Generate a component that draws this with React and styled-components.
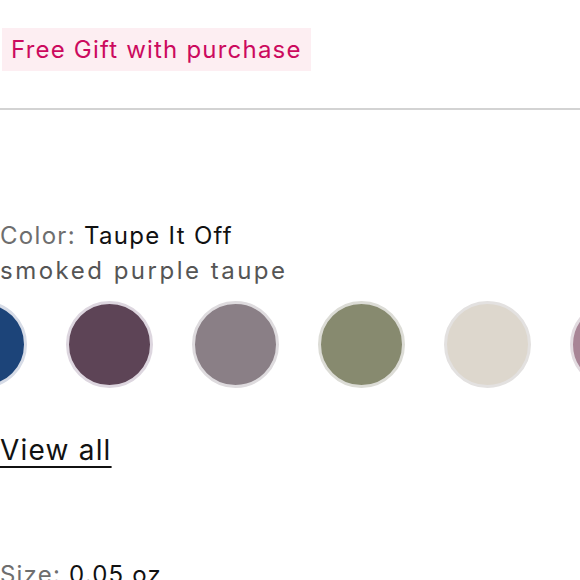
import styled, { createGlobalStyle } from "styled-components";

const GlobalStyle = createGlobalStyle`
    html, body {
        margin: 0;
        padding: 0;
        background: #fff;
        overflow: hidden;
    }
    body {
        font-family: "Inter", "Liberation Sans", sans-serif;
        color: #111;
    }
`;

const Page = styled.div`
    width: 580px;
    height: 580px;
    overflow: hidden;
    padding-top: 28px;
    box-sizing: border-box;
`;

const PromoBadge = styled.div`
    display: inline-flex;
    align-items: center;
    margin-left: 2px;
    height: 43px;
    padding: 0 9px;
    background: #fdeef2;
    color: #cc0a5e;
    font-size: 24px;
    letter-spacing: 1.2px;
`;

const Divider = styled.hr`
    margin: 37px 0 0;
    border: 0;
    height: 2px;
    background: #d3d3d3;
`;

const ColorBlock = styled.div`
    margin-top: 108px;
    font-size: 24px;
    letter-spacing: 1.3px;
    line-height: 35px;
`;

const Label = styled.span`
    color: #6e6e6e;
`;

const Value = styled.span`
    color: #111;
`;

const Description = styled.div`
    color: #555;
    letter-spacing: 2.5px;
`;

const SwatchViewport = styled.div`
    margin-top: 13px;
    overflow: hidden;
`;

const SwatchTrack = styled.div`
    display: flex;
    gap: 39px;
    margin-left: -60px;
`;

const Swatch = styled.div`
    flex: 0 0 auto;
    width: 87px;
    height: 87px;
    border-radius: 50%;
    box-sizing: border-box;
    background: ${(p) => p.color};
    border: 3px solid ${(p) => p.ring};
`;

const ViewAll = styled.a`
    display: inline-block;
    margin-top: 45px;
    font-size: 28px;
    color: #111;
    text-decoration: underline;
    text-decoration-thickness: 2px;
    text-underline-offset: 6px;
    letter-spacing: 1.2px;
`;

const SizeRow = styled.div`
    margin-top: 93px;
    font-size: 24px;
    letter-spacing: 1.2px;
`;

const swatches = [
    { color: "#1c4479", ring: "#d6dbe6" },
    { color: "#5d4456", ring: "#ddd6df" },
    { color: "#8a7f86", ring: "#dedbde" },
    { color: "#878a6f", ring: "#dcdcd6" },
    { color: "#ddd7cd", ring: "#e3e1e0" },
    { color: "#a88596", ring: "#e2dbe0" },
];

export default function App() {
    return (
        <Page>
            <GlobalStyle />
            <PromoBadge>Free Gift with purchase</PromoBadge>
            <Divider />
            <ColorBlock>
                <div>
                    <Label>Color: </Label>
                    <Value>Taupe It Off</Value>
                </div>
                <Description>smoked purple taupe</Description>
            </ColorBlock>
            <SwatchViewport>
                <SwatchTrack>
                    {swatches.map((s, i) => (
                        <Swatch key={i} color={s.color} ring={s.ring} />
                    ))}
                </SwatchTrack>
            </SwatchViewport>
            <ViewAll href='#'>View all</ViewAll>
            <SizeRow>
                <Label>Size: </Label>
                <Value>0.05 oz</Value>
            </SizeRow>
        </Page>
    );
}
